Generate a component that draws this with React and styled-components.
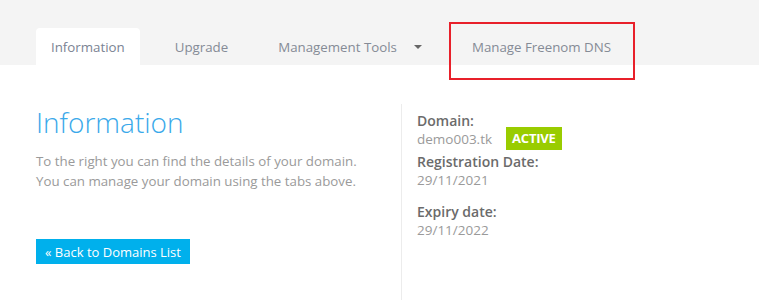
import React from 'react'
import styled, { createGlobalStyle } from 'styled-components'

const GlobalStyle = createGlobalStyle`
  body {
    margin: 0;
    background: #fff;
    font-family: "Open Sans", "Liberation Sans", sans-serif;
  }
`

const Header = styled.div`
  background: #f4f4f4;
  height: 65px;
  display: flex;
  align-items: flex-end;
  padding-left: 36px;
  position: relative;
`

const Tabs = styled.nav`
  display: flex;
  gap: 20px;
`

const Tab = styled.a`
  display: flex;
  align-items: center;
  height: 37px;
  padding: 0 15px;
  font-size: 13.3px;
  color: ${props => (props.active ? '#7a8393' : '#858b96')};
  background: ${props => (props.active ? '#fff' : 'transparent')};
  border-radius: 4px 4px 0 0;
  text-decoration: none;
  white-space: nowrap;
`

const Caret = styled.span`
  display: inline-block;
  margin-left: 17px;
  width: 0;
  height: 0;
  border-left: 4px solid transparent;
  border-right: 4px solid transparent;
  border-top: 4px solid #666;
`

const Highlight = styled.div`
  position: absolute;
  left: 449px;
  top: 22px;
  width: 186px;
  height: 58px;
  box-sizing: border-box;
  border: 2px solid #e8202a;
  z-index: 2;
`

const Content = styled.div`
  display: grid;
  grid-template-columns: 365px 1fr;
  box-sizing: border-box;
  padding-left: 36px;
  padding-top: 39px;
  height: 235px;
  overflow: hidden;
`

const Left = styled.div``

const Title = styled.h1`
  margin: 0;
  font-size: 28px;
  font-weight: 300;
  line-height: 36px;
  color: #3aa9ea;
`

const Text = styled.p`
  margin: 11px 0 0;
  font-size: 13.3px;
  line-height: 20px;
  color: #9a9a9a;
`

const BackButton = styled.a`
  display: inline-flex;
  align-items: center;
  margin-top: 48px;
  height: 25px;
  padding: 0 9px;
  background: #00b0ec;
  color: #fff;
  font-size: 13px;
  text-decoration: none;
  white-space: nowrap;
`

const Right = styled.div`
  border-left: 1px solid #ececec;
  padding-left: 15px;
  padding-top: 8px;
`

const Label = styled.div`
  font-size: 14px;
  font-weight: 600;
  line-height: 18px;
  color: #6b6b6b;
  margin-top: ${props => props.gap || 0}px;
`

const Value = styled.div`
  display: flex;
  align-items: center;
  font-size: 13.5px;
  line-height: 18px;
  color: #9a9a9a;
`

const BadgeRow = styled(Value)`
  height: 23px;
  margin-top: -3px;
`

const Badge = styled.span`
  margin-left: 14px;
  background: #99cc00;
  color: #fff;
  font-weight: 700;
  font-size: 13px;
  height: 23px;
  line-height: 23px;
  padding: 0 6px;
  letter-spacing: -0.2px;
`

const App = () => {
  return (
    <React.Fragment>
      <GlobalStyle />
      <Header>
        <Tabs>
          <Tab active>Information</Tab>
          <Tab>Upgrade</Tab>
          <Tab>
            Management Tools
            <Caret />
          </Tab>
          <Tab>Manage Freenom DNS</Tab>
        </Tabs>
        <Highlight />
      </Header>
      <Content>
        <Left>
          <Title>Information</Title>
          <Text>
            To the right you can find the details of your domain.
            <br />
            You can manage your domain using the tabs above.
          </Text>
          <BackButton>« Back to Domains List</BackButton>
        </Left>
        <Right>
          <Label>Domain:</Label>
          <BadgeRow>
            demo003.tk
            <Badge>ACTIVE</Badge>
          </BadgeRow>
          <Label gap={3}>Registration Date:</Label>
          <Value>29/11/2021</Value>
          <Label gap={14}>Expiry date:</Label>
          <Value>29/11/2022</Value>
        </Right>
      </Content>
    </React.Fragment>
  )
}

export default App
